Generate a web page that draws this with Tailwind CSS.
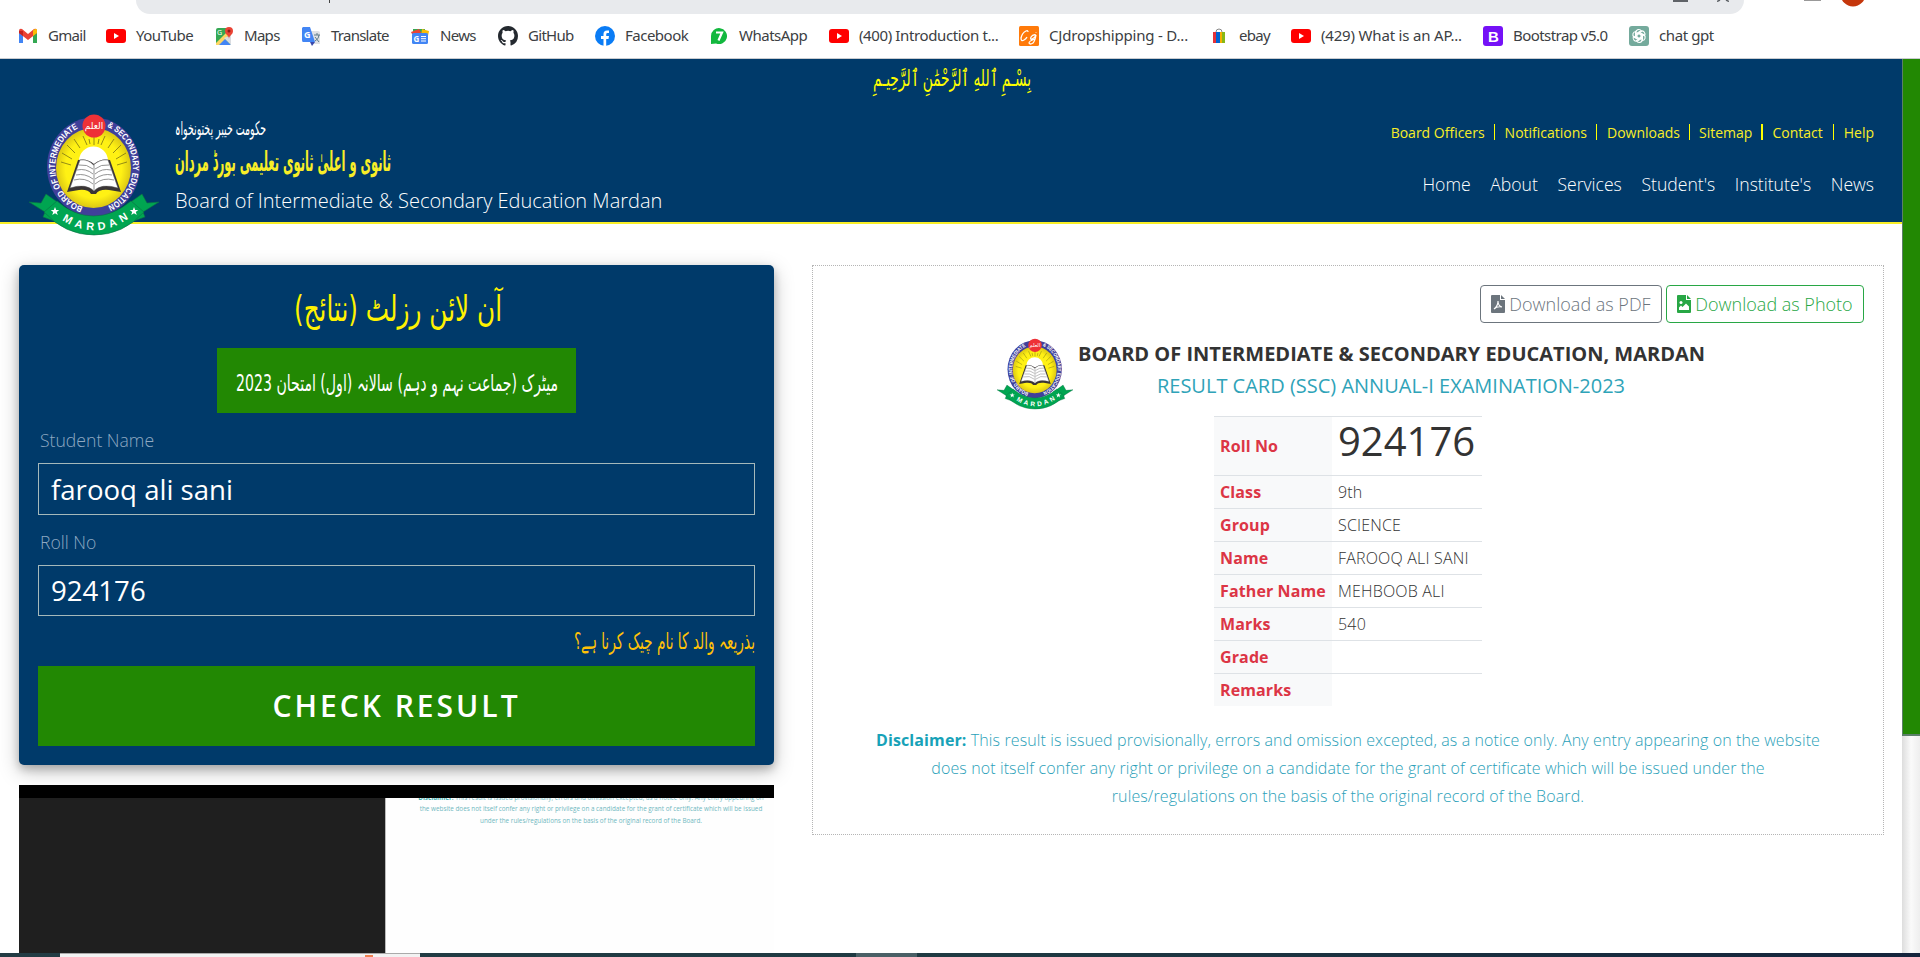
<!DOCTYPE html>
<html lang="en">
<head>
<meta charset="utf-8">
<title>BISE Mardan - Result</title>
<script src="https://cdn.jsdelivr.net/npm/@tailwindcss/browser@4"></script>
</head>
<body class="w-[1920px] h-[957px] overflow-hidden bg-white font-['Open_Sans',sans-serif] text-[#333] flex flex-col">

<svg width="0" height="0" class="absolute">
  <defs>
    <path id="ringL" d="M54 93 A40.500 42.500 0 0 1 52 13"/>
    <path id="ringR" d="M78 13 A40.500 42.500 0 0 1 76 93"/>
    <path id="ribbonText" d="M33 106 Q65 127 99 105"/>
    <radialGradient id="sun"><stop offset="0.75" stop-color="#fff114"/><stop offset="1" stop-color="#dcc814"/></radialGradient>
    <symbol id="crest" viewBox="0 0 130 122">
      <path d="M0 88L12 89L17 80L34 92L28 108L14 103L16 98Z" fill="#00a551" stroke="#0b6e45" stroke-width=".6"/>
      <path d="M130 88L118 89L113 80L96 92L102 108L116 103L114 98Z" fill="#00a551" stroke="#0b6e45" stroke-width=".6"/>
      <ellipse cx="64.5" cy="53" rx="46.5" ry="49.5" fill="#40409a"/>
      <ellipse cx="64.5" cy="54" rx="37.5" ry="40" fill="url(#sun)"/>
      <g stroke="#7a7414" stroke-width=".8"><path d="M65 31V21M58 31L54 22M51 34L45 25M46 39L38 31M43 45L33 39M42 51L32 48M72 31L76 22M79 34L85 25M84 39L92 31M87 45L97 39M88 51L98 48M61 30L60 25M69 30L70 25"/></g>
      <circle cx="64.500" cy="47" r="14.500" fill="#fff"/>
      <path d="M38 78L49 46Q58 44 65 50Q72 44 81 46L92 78L80 76Q70 75 67 80H62Q59 75 50 76Z" fill="#3a3536"/>
      <path d="M41 74L51 46Q59 45 64.500 51Q71 45 79 46L89 74Q72 69 65 77Q57 69 41 74Z" fill="#fff" stroke="#555" stroke-width=".5"/>
      <path d="M50 51Q58 50 64 55M48 56Q57 54 64 60M47 61Q56 59 64 65M45 66Q56 63 64 70M80 51Q72 50 66 55M82 56Q73 54 66 60M83 61Q74 59 66 65M85 66Q74 63 66 70M65 51V76" fill="none" stroke="#777" stroke-width=".8"/>
      <text font-family="Liberation Sans" font-weight="700" font-size="8.8" fill="#fff"><textPath href="#ringL" startOffset="0" textLength="99" lengthAdjust="spacingAndGlyphs">BOARD OF INTERMEDIATE</textPath></text>
      <text font-family="Liberation Sans" font-weight="700" font-size="8.8" fill="#fff"><textPath href="#ringR" startOffset="0" textLength="99" lengthAdjust="spacingAndGlyphs">&amp; SECONDARY EDUCATION</textPath></text>
      <circle cx="65" cy="12" r="11.500" fill="#ee3137"/>
      <text x="65" y="15" text-anchor="middle" font-family="DejaVu Sans" font-size="9" fill="#fff">العلم</text>
      <path d="M28 87Q45 102 64.500 102Q84 102 102 87L115 98Q94 121 65 121Q36 121 15 98Z" fill="#00a551" stroke="#0b6e45" stroke-width=".6"/>
      <text font-family="Liberation Sans" font-weight="700" font-size="11" fill="#fff"><textPath href="#ribbonText" textLength="71">MARDAN</textPath></text>
      <path d="M26 93l1.200 3h3l-2.400 2 1 3-2.800-1.800-2.800 1.800 1-3-2.400-2h3z" fill="#fff"/>
      <path d="M105 93l1.200 3h3l-2.400 2 1 3-2.800-1.800-2.800 1.800 1-3-2.400-2h3z" fill="#fff"/>
    </symbol>
    <symbol id="yt" viewBox="0 0 20 20"><rect y="3" width="20" height="14" rx="3" fill="#f00"/><path d="M8 7v6l5-3z" fill="#fff"/></symbol>
  </defs>
</svg>

<!-- Browser toolbar remnant and bookmarks -->
<div class="h-[59px] shrink-0 border-b border-[#c9ccd0] flex flex-col">
  <div class="h-[14px] flex items-start shrink-0">
    <div class="ml-[136px] w-[1608px] h-[14px] bg-[#e8eaed] rounded-b-[18px] flex items-start">
      <span class="ml-[193px] w-px h-[3px] bg-[#444]"></span>
      <span class="ml-[1343px] w-[15px] h-[2px] bg-[#5f6368]"></span>
      <svg class="ml-[29px]" width="12" height="2"><path d="M0 1.500L3 0M12 1.500L9 0" stroke="#5f6368" stroke-width="1.500"/></svg>
    </div>
    <span class="ml-[60px] w-[17px] h-[1px] bg-[#999]"></span>
    <svg class="ml-[19px]" width="26" height="7"><circle cx="13" cy="-6" r="12.500" fill="#c5370c"/></svg>
  </div>
  <div class="flex flex-1 items-center pl-[18px] pb-px text-[15px] font-normal text-[#3c4043] whitespace-nowrap font-['Noto_Sans',sans-serif]">
    <div class="flex items-center gap-[10px] w-[88px] shrink-0"><svg width="20" height="20" viewBox="0 0 20 20"><path d="M1 4v13h4V9z" fill="#4285f4"/><path d="M19 4v13h-4V9z" fill="#34a853"/><path d="M1 5q0-3 3-2l6 5 6-5q3-1 3 2v2l-9 7-9-7z" fill="#ea4335"/><path d="M15 4.500Q19 1 19 5v2l-4 3z" fill="#fbbc04"/><path d="M1 5v2l4 3V5z" fill="#c5221f"/></svg><span class="tracking-[-0.7px]">Gmail</span></div>
    <div class="flex items-center gap-[10px] w-[108px] shrink-0"><svg width="20" height="20"><use href="#yt"/></svg><span class="tracking-[-0.5px]">YouTube</span></div>
    <div class="flex items-center gap-[10px] w-[87px] shrink-0"><svg width="20" height="20" viewBox="0 0 20 20"><rect x="2" y="2" width="15" height="17" rx="2" fill="#34a853"/><path d="M2 19L9 11l8 8z" fill="#4285f4"/><path d="M2 17L15 4l2 3L5 19H2z" fill="#fdd663"/><path d="M10 12l7 7V9z" fill="#dadce0"/><path d="M15 13c0-4-4-4-4-8a4 4 0 0 1 8 0c0 4-4 4-4 8z" fill="#ea4335"/><circle cx="15" cy="5" r="1.500" fill="#8c1b13"/><text x="3" y="9" font-size="7" fill="#fff">G</text></svg><span class="tracking-[-0.7px]">Maps</span></div>
    <div class="flex items-center gap-[10px] w-[109px] shrink-0"><svg width="20" height="20" viewBox="0 0 20 20"><path d="M8 5h9q2 0 2 2v11H12z" fill="#dfe1e5"/><path d="M2 1h7l5 15H2q-1 0-1-2V2z" fill="#4285f4"/><path d="M9 16h5l-3 4z" fill="#3949ab"/><text x="3" y="12" font-size="9" font-weight="700" fill="#fff">G</text><path d="M13 9h6M16 7v2M14 15q4-2 4-6M14 11l4 5" stroke="#607d8b" fill="none"/></svg><span class="tracking-[-0.75px]">Translate</span></div>
    <div class="flex items-center gap-[10px] w-[88px] shrink-0"><svg width="20" height="20" viewBox="0 0 20 20"><path d="M3 3h12v5H3z" fill="#34a853"/><path d="M1 6l8-3 3 5H2z" fill="#ea4335"/><path d="M12 3l7 2-1 5h-7z" fill="#fbbc04"/><rect x="2" y="7" width="16" height="11" rx="1.500" fill="#4285f4"/><text x="3.500" y="15.500" font-size="8" font-weight="700" fill="#fff">G</text><path d="M11 10.500h5M11 12.700h5M11 15h5" stroke="#fff"/></svg><span class="tracking-[-0.7px]">News</span></div>
    <div class="flex items-center gap-[10px] w-[97px] shrink-0"><svg width="20" height="20" viewBox="0 0 16 16"><path fill="#24292f" d="M8 0C3.580 0 0 3.580 0 8c0 3.540 2.290 6.530 5.470 7.590.4.070.55-.17.55-.38 0-.19-.01-.82-.01-1.490-2.010.37-2.530-.49-2.690-.94-.09-.23-.48-.94-.82-1.130-.28-.15-.68-.52-.01-.53.63-.01 1.080.58 1.230.82.72 1.210 1.870.87 2.330.66.07-.52.28-.87.51-1.070-1.780-.2-3.640-.89-3.640-3.950 0-.87.31-1.590.82-2.150-.08-.2-.36-1.020.08-2.120 0 0 .67-.21 2.200.82a7.600 7.600 0 0 1 4 0c1.530-1.040 2.200-.82 2.200-.82.44 1.100.16 1.920.08 2.120.51.56.82 1.270.82 2.150 0 3.070-1.870 3.750-3.650 3.950.29.25.54.73.54 1.480 0 1.070-.01 1.930-.01 2.200 0 .21.15.46.55.38A8 8 0 0 0 16 8c0-4.420-3.580-8-8-8z"/></svg><span class="tracking-[-0.7px]">GitHub</span></div>
    <div class="flex items-center gap-[10px] w-[114px] shrink-0"><svg width="20" height="20" viewBox="0 0 20 20"><circle cx="10" cy="10" r="10" fill="#0a7cf5"/><path d="M8.500 20v-7H6v-3h2.500V8q0-3.500 3.500-3.500h2V7h-1.500q-1.300 0-1.300 1.400V10H14l-.5 3h-2.300v7z" fill="#fff"/></svg><span class="tracking-[-0.5px]">Facebook</span></div>
    <div class="flex items-center gap-[10px] w-[120px] shrink-0"><svg width="20" height="20" viewBox="0 0 20 20"><path d="M2 18V10a8 8 0 1 1 5 7.500z" fill="#12b83e"/><path d="M7 6.500h6l-3.500 8" fill="none" stroke="#fff" stroke-width="2.200"/></svg><span class="tracking-[-0.5px]">WhatsApp</span></div>
    <div class="flex items-center gap-[10px] w-[190px] shrink-0"><svg width="20" height="20"><use href="#yt"/></svg><span class="tracking-[-0.38px]">(400) Introduction t...</span></div>
    <div class="flex items-center gap-[10px] w-[190px] shrink-0"><svg width="20" height="20" viewBox="0 0 20 20"><rect width="20" height="20" rx="1.500" fill="#ff7a0a"/><path d="M9 6q0-2-2-1-4 2-5 7 0 4 3 2 2-1 3-3M17 9q-3-1-5 2-1 3 1 2 3-1 4-4-1 6-3 8-3 2-4 0 0-2 6-4M17 6v.5" stroke="#fff" stroke-width="1.300" fill="none"/></svg><span class="tracking-[-0.2px]">CJdropshipping - D...</span></div>
    <div class="flex items-center gap-[10px] w-[82px] shrink-0"><svg width="20" height="20" viewBox="0 0 20 20"><path d="M7 6q0-3 3-3t3 3" fill="none" stroke="#888"/><path d="M4 6h3v11H4z" fill="#e53238"/><path d="M7 6h4v11H7z" fill="#0064d2"/><path d="M11 6h2v11h-2z" fill="#f5af02"/><path d="M13 6h3v11h-3z" fill="#86b817"/></svg><span class="tracking-[-0.7px]">ebay</span></div>
    <div class="flex items-center gap-[10px] w-[192px] shrink-0"><svg width="20" height="20"><use href="#yt"/></svg><span class="tracking-[-0.18px]">(429) What is an AP...</span></div>
    <div class="flex items-center gap-[10px] w-[146px] shrink-0"><svg width="20" height="20" viewBox="0 0 20 20"><rect width="20" height="20" rx="3" fill="#7511f7"/><text x="5" y="15.500" font-family="Liberation Sans" font-size="15" font-weight="700" fill="#fff">B</text></svg><span class="tracking-[-0.55px]">Bootstrap v5.0</span></div>
    <div class="flex items-center gap-[10px] shrink-0"><svg width="20" height="20" viewBox="0 0 20 20"><rect width="20" height="20" rx="3" fill="#74aa9c"/><g fill="none" stroke="#fff" stroke-width="1.100"><path id="pt" d="M6.500 12V6.500a3.200 3.200 0 0 1 6-1.300L8 8v4.500"/><use href="#pt" transform="rotate(60 10 10)"/><use href="#pt" transform="rotate(120 10 10)"/><use href="#pt" transform="rotate(180 10 10)"/><use href="#pt" transform="rotate(240 10 10)"/><use href="#pt" transform="rotate(300 10 10)"/></g></svg><span class="tracking-[-0.4px]">chat gpt</span></div>
  </div>
</div>

<div class="flex flex-1 min-h-0">
  <div class="w-[1902px] shrink-0 flex flex-col">
    <!-- Site header -->
    <header class="h-[165px] shrink-0 bg-[#003a6a] border-b-2 border-[#f8ee27] flex flex-col">
      <div class="h-[55px] shrink-0 pl-[873px]">
        <svg width="160" height="42" class="overflow-visible"><text direction="rtl" x="158" y="27" textLength="158" lengthAdjust="spacingAndGlyphs" font-family="DejaVu Sans" font-size="23" fill="#ff0">بِسْـمِ ٱللهِ ٱلرَّحْمَٰنِ ٱلرَّحِيـمِ</text></svg>
      </div>
      <div class="flex h-[108px]">
        <svg class="ml-[29px] w-[130px] h-[122px] shrink-0 relative z-10"><use href="#crest"/></svg>
        <div class="ml-[16px] w-[600px] flex flex-col">
          <svg width="260" height="72" class="overflow-visible shrink-0">
            <text direction="rtl" x="91" y="21" textLength="91" lengthAdjust="spacingAndGlyphs" font-family="DejaVu Sans" font-size="19" fill="#fff">حکومت خیبر پختونخواہ</text>
            <text direction="rtl" x="216" y="57" textLength="216" lengthAdjust="spacingAndGlyphs" font-family="DejaVu Sans" font-weight="700" font-size="27" fill="#f8ee27">ثانوی و اعلیٰ ثانوی تعلیمی بورڈ مردان</text>
          </svg>
          <div class="text-[20px] leading-[30px] font-light text-white whitespace-nowrap">Board of Intermediate &amp; Secondary Education Mardan</div>
        </div>
        <div class="flex-1 flex flex-col items-end pr-[28px]">
          <div class="mt-[9px] flex items-center h-[18px] text-[14px] text-[#f8ee27] whitespace-nowrap">
            <span>Board Officers</span><i class="w-px h-[16px] bg-[#ff0] mx-[9px]"></i><span class="ml-px">Notifications</span><i class="w-px h-[16px] bg-[#ff0] mx-[9px]"></i><span class="ml-px">Downloads</span><i class="w-px h-[16px] bg-[#ff0] mx-[9px]"></i><span>Sitemap</span><i class="w-[2px] h-[16px] bg-[#ff0] mx-[9px]"></i><span class="mr-px">Contact</span><i class="w-px h-[16px] bg-[#ff0] mx-[9px]"></i><span class="ml-px">Help</span>
          </div>
          <nav class="mt-[30px] flex gap-[19.600px] text-[17.600px] leading-[26px] font-light text-white whitespace-nowrap">
            <span>Home</span><span>About</span><span>Services</span><span>Student's</span><span>Institute's</span><span>News</span>
          </nav>
        </div>
      </div>
    </header>

    <main class="flex flex-1 min-h-0 pt-[41px] pl-[19px] items-start">
      <div class="w-[755px] shrink-0">
        <section class="h-[500px] bg-[#003a6a] rounded-[5px] px-[19px] flex flex-col shadow-[0_4px_8px_rgba(0,0,0,0.2),0_6px_20px_rgba(0,0,0,0.25)]">
          <svg width="717" height="83" class="shrink-0 overflow-visible"><text direction="rtl" x="464" y="56" textLength="208" lengthAdjust="spacingAndGlyphs" font-family="DejaVu Sans" font-size="36" fill="#fff200">آن لائن رزلٹ (نتائج)</text></svg>
          <div class="w-[359px] h-[65px] shrink-0 self-center bg-[#228803]">
            <svg width="359" height="65" class="overflow-visible"><text direction="rtl" x="341" y="43" textLength="322" lengthAdjust="spacingAndGlyphs" font-family="DejaVu Sans" font-size="23" fill="#fff">میٹرک (جماعت نہم و دہم) سالانہ (اول) امتحان 2023</text></svg>
          </div>
          <label class="mt-[14px] h-[27px] leading-[27px] ml-[2px] text-[17.600px] font-light text-[#8fa9c2] shrink-0">Student Name</label>
          <div class="mt-[9px] h-[52px] shrink-0 border border-[#a5b8ba] px-[12px] text-[27.600px] leading-[51px] text-white">farooq ali sani</div>
          <label class="mt-[14px] h-[27px] leading-[27px] ml-[2px] text-[17.600px] font-light text-[#8fa9c2] shrink-0">Roll No</label>
          <div class="mt-[9px] h-[51px] shrink-0 border border-[#a5b8ba] px-[12px] text-[27.600px] leading-[49px] text-white">924176</div>
          <svg width="717" height="50" class="shrink-0 overflow-visible"><text direction="rtl" x="717" y="33" textLength="181" lengthAdjust="spacingAndGlyphs" font-family="DejaVu Sans" font-size="23" fill="#ffc107">بذریعہ والد کا نام چیک کرنا ہے؟</text></svg>
          <div class="h-[80px] shrink-0 bg-[#228803] text-white text-[30px] font-semibold tracking-[3px] text-center leading-[80px]">CHECK RESULT</div>
        </section>
        <!-- Video -->
        <div class="mt-[20px] h-[13px] bg-black"></div>
        <div class="flex h-[155px]">
          <div class="w-[366px] shrink-0 bg-[#1f1f1f]"></div>
          <div class="flex-1 min-w-0 border-l border-[#bbb] overflow-hidden bg-[#fefefe]">
            <div class="-mt-[6px] pl-[30px] pr-[8px] text-[6.330px] leading-[11.300px] text-center text-[#6fb8c0] whitespace-nowrap"><b class="text-[#3eafae]">Disclaimer:</b> This result is issued provisionally, errors and omission excepted, as a notice only. Any entry appearing on<br>the website does not itself confer any right or privilege on a candidate for the grant of certificate which will be issued<br>under the rules/regulations on the basis of the original record of the Board.</div>
          </div>
        </div>
      </div>

      <section class="ml-[38px] w-[1072px] h-[570px] shrink-0 border border-dotted border-[#b5b5b5] flex flex-col pt-[19px] px-[19px]">
        <div class="flex justify-end gap-[4px] h-[38px] text-[18px] font-light whitespace-nowrap">
          <div class="w-[182px] border border-[#6c757d] rounded-[4px] text-[#6c757d] flex items-center justify-center gap-[4px]"><svg width="14" height="18" viewBox="0 0 14 18"><path fill="#6c757d" d="M1 0h8v5h5v12q0 1-1 1H1q-1 0-1-1V1q0-1 1-1zM10 0l4 4h-4z"/><path d="M3 14q4-3 4-8M7 6q0 5 4 6M3 14q3-3 8-2" fill="none" stroke="#fff" stroke-width="1.100"/></svg><span>Download as PDF</span></div>
          <div class="w-[198px] border border-[#28a745] rounded-[4px] text-[#28a745] flex items-center justify-center gap-[4px]"><svg width="14" height="18" viewBox="0 0 14 18"><path fill="#28a745" d="M1 0h8v5h5v12q0 1-1 1H1q-1 0-1-1V1q0-1 1-1zM10 0l4 4h-4z"/><circle cx="4" cy="7.500" r="1.500" fill="#fff"/><path d="M2 15v-2.500l2-2 1.500 1.500L9 8.500l3 3V15z" fill="#fff"/></svg><span>Download as Photo</span></div>
        </div>
        <div class="flex pl-[165px] pt-[15px]">
          <svg class="w-[76px] h-[72px] shrink-0"><use href="#crest"/></svg>
          <div class="ml-[5px] w-[626px] text-center whitespace-nowrap">
            <div class="text-[20px] leading-[32px] font-bold">BOARD OF INTERMEDIATE &amp; SECONDARY EDUCATION, MARDAN</div>
            <div class="text-[20px] leading-[32px] font-normal text-[#2fa3b8]">RESULT CARD (SSC) ANNUAL-I EXAMINATION-2023</div>
          </div>
        </div>
        <div class="self-center mt-[6px] w-[268px] grid grid-cols-[118px_150px] text-[16px] leading-[24px] whitespace-nowrap [&>b]:border-t [&>b]:border-[#dee2e6] [&>b]:bg-[#f8f9fa] [&>b]:px-[6px] [&>b]:flex [&>b]:items-center [&>b]:text-[#dc3545] [&>b]:tracking-[0.12px] [&>p]:border-t [&>p]:border-[#dee2e6] [&>p]:px-[6px] [&>p]:py-[4px] [&>p]:font-light [&>p]:h-[33px] [&>p]:tracking-[0.18px]">
          <b class="h-[59px]">Roll No</b><div class="border-t border-[#dee2e6] px-[6px] text-[40px] leading-[48px]">924176</div>
          <b>Class</b><p>9th</p>
          <b>Group</b><p>SCIENCE</p>
          <b>Name</b><p>FAROOQ ALI SANI</p>
          <b>Father Name</b><p>MEHBOOB ALI</p>
          <b>Marks</b><p>540</p>
          <b>Grade</b><p></p>
          <b>Remarks</b><p></p>
        </div>
        <div class="mt-[20px] text-center text-[16px] leading-[28px] tracking-[0.11px] font-light text-[#2b9fb9] whitespace-nowrap"><b class="font-bold text-[#17a2b8]">Disclaimer:</b> This result is issued provisionally, errors and omission excepted, as a notice only. Any entry appearing on the website<br>does not itself confer any right or privilege on a candidate for the grant of certificate which will be issued under the<br>rules/regulations on the basis of the original record of the Board.</div>
      </section>
    </main>
  </div>
  <!-- Scrollbar -->
  <div class="w-[18px] h-[894px] bg-gradient-to-r from-[#ddd] via-[#fafafa] to-[#eee]"><div class="h-[677px] bg-[#228803] border-l border-b-2 border-[#5c7f6a]"></div></div>
</div>

<!-- Taskbar edge -->
<div class="h-[4px] shrink-0 relative z-20 bg-gradient-to-r from-[#233c44] via-[#1f3a42] to-[#15243c] flex">
  <div class="ml-[60px] w-[360px] bg-[#f2f2f2] border-t border-[#aaa] flex items-end"><i class="ml-[305px] w-[8px] h-[2px] bg-[#f08050]"></i></div>
  <div class="ml-[436px] w-[61px] bg-[#4a6066]"></div>
</div>
</body>
</html>
